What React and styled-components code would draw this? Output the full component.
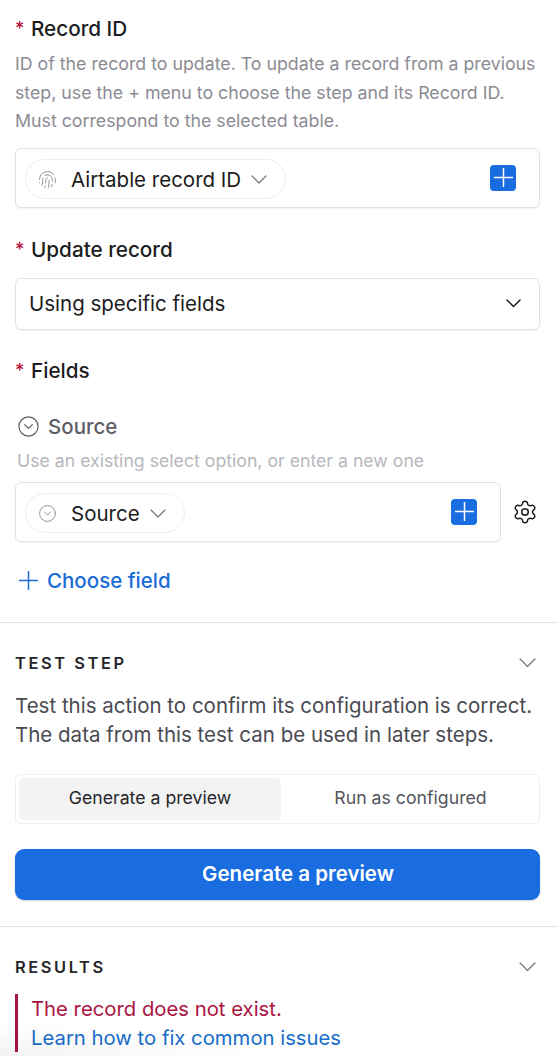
import styled, { createGlobalStyle } from 'styled-components';
import { Settings, Fingerprint, CircleChevronDown } from 'lucide-react';

const GlobalStyle = createGlobalStyle`
  html, body {
    margin: 0;
    padding: 0;
    background: #fff;
  }
  body {
    font-family: Inter, "Liberation Sans", sans-serif;
    color: #1c1c21;
    overflow: hidden;
  }
  * {
    box-sizing: border-box;
  }
`;

const Page = styled.div`
  position: relative;
  width: 558px;
  height: 1056px;
  overflow: hidden;
`;

const FormArea = styled.div`
  padding: 14px 18px 0 15px;
  height: 623px;
  border-bottom: 1px solid #e4e4e6;
`;

const Label = styled.div`
  display: flex;
  align-items: center;
  height: 28px;
  font-size: 20.7px;
  font-weight: 500;
  color: #1c1c21;
`;

const Star = styled.span`
  width: 16px;
  font-size: 18px;
  color: #b5103c;
`;

const Help = styled.p`
  margin: 8px 0 12px;
  font-size: 17.75px;
  line-height: 28.5px;
  color: #8b8b93;
`;

const InputBox = styled.div`
  display: flex;
  align-items: center;
  justify-content: space-between;
  height: 60px;
  width: ${(p) => p.$width || '100%'};
  padding: 0 23px 0 9px;
  border: 1px solid #e2e2e4;
  border-radius: 6px;
  box-shadow: 0 1px 1px rgba(0, 0, 0, 0.05);
`;

const Pill = styled.div`
  display: flex;
  align-items: center;
  height: 40px;
  margin-top: 3px;
  padding: 1px 18px 0 12px;
  border: 1px solid #eeeeef;
  border-radius: 20px;
  font-size: 20.5px;
  color: #1c1c21;
`;

const PillIcon = styled.span`
  display: flex;
  width: 33px;
  color: #8f8f96;
`;

const PillCaret = styled.span`
  display: flex;
  margin-left: 10px;
  color: #77777e;
`;

const AddButton = styled.div`
  display: flex;
  align-items: center;
  justify-content: center;
  width: 26px;
  height: 26px;
  border-radius: 4px;
  background: #1a6de0;
  color: #fff;
`;

const Group = styled.div`
  margin-top: ${(p) => p.$top || 0}px;
`;

const SelectBox = styled.div`
  display: flex;
  align-items: center;
  justify-content: space-between;
  height: 52px;
  margin-top: 14px;
  padding: 0 18px 0 13px;
  border: 1px solid #e2e2e4;
  border-radius: 6px;
  box-shadow: 0 1px 1px rgba(0, 0, 0, 0.05);
  font-size: 20.5px;
`;

const FieldName = styled.div`
  display: flex;
  align-items: center;
  gap: 8px;
  height: 28px;
  padding-left: 2px;
  font-size: 20.5px;
  font-weight: 500;
  color: #5d5d66;
`;

const FieldHint = styled.div`
  margin: 8px 0 9px 2px;
  height: 24px;
  line-height: 24px;
  font-size: 17.7px;
  color: #b7b7bc;
`;

const FieldRow = styled.div`
  display: flex;
  align-items: center;
  gap: 11px;
`;

const ChooseField = styled.div`
  display: flex;
  align-items: center;
  gap: 9px;
  margin-top: 25px;
  padding-left: 4px;
  height: 28px;
  font-size: 20.5px;
  font-weight: 500;
  color: #1a6dd6;
`;

const Section = styled.section`
  padding: 0 18px 0 15px;
  height: ${(p) => p.$height}px;
  border-bottom: ${(p) => (p.$divided ? '1px solid #e4e4e6' : 'none')};
`;

const SectionHeader = styled.div`
  display: flex;
  align-items: center;
  justify-content: space-between;
  padding: 29px 4px 0 0;
  height: 51px;
  color: #77777e;
`;

const SectionTitle = styled.h3`
  margin: 0;
  font-size: 16.4px;
  font-weight: 600;
  letter-spacing: 2.6px;
  color: #26262b;
`;

const SectionText = styled.p`
  margin: 18px 0 25px;
  font-size: 20.5px;
  line-height: 28.5px;
  color: #4a4a52;
`;

const Tabs = styled.div`
  display: grid;
  grid-template-columns: 262px 1fr;
  height: 50px;
  padding: 3px;
  border: 1px solid #efeff0;
  border-radius: 5px;
`;

const Tab = styled.div`
  display: flex;
  align-items: center;
  justify-content: center;
  padding: 0 0 3px ${(p) => (p.$active ? 0 : 4)}px;
  border-radius: 5px;
  font-size: 17.7px;
  background: ${(p) => (p.$active ? '#f3f3f4' : 'transparent')};
  color: ${(p) => (p.$active ? '#26262b' : '#55555d')};
`;

const PrimaryButton = styled.button`
  display: block;
  width: 100%;
  height: 51px;
  margin-top: 25px;
  padding: 0 0 2px 41px;
  border: none;
  border-radius: 9px;
  background: #1a6de0;
  box-shadow: 0 1px 2px rgba(0, 0, 0, 0.2);
  color: #fff;
  font-family: inherit;
  font-size: 20.5px;
  font-weight: 600;
`;

const ErrorBlock = styled.div`
  margin-top: 16px;
  padding: 1px 0 0 13px;
  border-left: 3px solid #ab1342;
  font-size: 20.3px;
  line-height: 28.5px;
  height: 58px;
`;

const ErrorText = styled.div`
  color: #ab1342;
`;

const ErrorLink = styled.a`
  display: block;
  color: #1a6dc8;
`;

const BottomFade = styled.div`
  position: absolute;
  left: 0;
  right: 0;
  bottom: 0;
  height: 30px;
  background: linear-gradient(to top, rgba(0, 0, 0, 0.05), rgba(0, 0, 0, 0));
  -webkit-mask-image: linear-gradient(to right, #000, transparent 45%);
  mask-image: linear-gradient(to right, #000, transparent 45%);
  pointer-events: none;
`;

function CaretMark({ width = 16, stroke = 1.25 }) {
  return (
    <svg width={width} height={width * 0.56} viewBox="0 0 16 9" fill="none">
      <path d="M1 1l7 7 7-7" stroke="currentColor" strokeWidth={stroke} strokeLinecap="round" strokeLinejoin="round" />
    </svg>
  );
}

function PlusMark({ size = 18, stroke = 1.4 }) {
  return (
    <svg width={size} height={size} viewBox="0 0 18 18" fill="none">
      <path d="M9 0v18M0 9h18" stroke="currentColor" strokeWidth={stroke} />
    </svg>
  );
}

function Required({ children }) {
  return (
    <Label>
      <Star>*</Star>
      {children}
    </Label>
  );
}

function TokenInput({ icon, text, width }) {
  return (
    <InputBox $width={width}>
      <Pill>
        <PillIcon>{icon}</PillIcon>
        {text}
        <PillCaret>
          <CaretMark width={16} />
        </PillCaret>
      </Pill>
      <AddButton>
        <PlusMark size={19} />
      </AddButton>
    </InputBox>
  );
}

function App() {
  return (
    <Page>
      <GlobalStyle />
      <FormArea>
        <Required>Record ID</Required>
        <Help>
          ID of the record to update. To update a record from a previous step, use the + menu to
          choose the step and its Record ID. Must correspond to the selected table.
        </Help>
        <TokenInput icon={<Fingerprint size={19} strokeWidth={1.25} />} text="Airtable record ID" />

        <Group $top={28}>
          <Required>Update record</Required>
          <SelectBox>
            Using specific fields
            <CaretMark width={15} stroke={1.6} />
          </SelectBox>
        </Group>

        <Group $top={27}>
          <Required>Fields</Required>
        </Group>

        <Group $top={28}>
          <FieldName>
            <CircleChevronDown size={23} strokeWidth={1.25} />
            Source
          </FieldName>
          <FieldHint>Use an existing select option, or enter a new one</FieldHint>
          <FieldRow>
            <TokenInput icon={<CircleChevronDown size={19} strokeWidth={1.25} />} text="Source" width="486px" />
            <Settings size={26} strokeWidth={1.4} />
          </FieldRow>
        </Group>

        <ChooseField>
          <PlusMark size={19} />
          Choose field
        </ChooseField>
      </FormArea>

      <Section $height={304} $divided>
        <SectionHeader>
          <SectionTitle>TEST STEP</SectionTitle>
          <CaretMark width={17} />
        </SectionHeader>
        <SectionText>
          Test this action to confirm its configuration is correct. The data from this test can be
          used in later steps.
        </SectionText>
        <Tabs>
          <Tab $active>Generate a preview</Tab>
          <Tab>Run as configured</Tab>
        </Tabs>
        <PrimaryButton>Generate a preview</PrimaryButton>
      </Section>

      <Section $height={130}>
        <SectionHeader>
          <SectionTitle>RESULTS</SectionTitle>
          <CaretMark width={17} />
        </SectionHeader>
        <ErrorBlock>
          <ErrorText>The record does not exist.</ErrorText>
          <ErrorLink>Learn how to fix common issues</ErrorLink>
        </ErrorBlock>
      </Section>
      <BottomFade />
    </Page>
  );
}

export default App;
